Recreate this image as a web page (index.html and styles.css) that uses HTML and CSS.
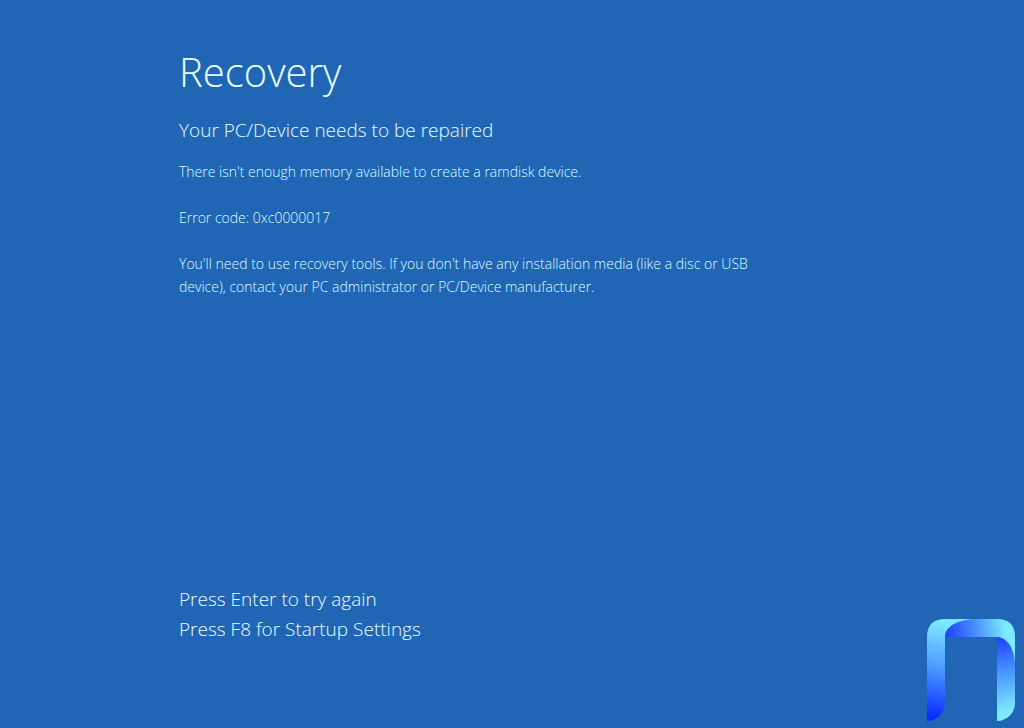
FILE: index.html
```
<!DOCTYPE html>
<html lang="en">
<head>
    <meta charset="UTF-8">
    <meta name="viewport" content="width=device-width, initial-scale=1.0">
    <title>Recovery</title>
    <link rel="stylesheet" href="styles.css">
</head>
<body>
    <main class="message">
        <h1>Recovery</h1>
        <h2>Your PC/Device needs to be repaired</h2>
        <p>There isn't enough memory available to create a ramdisk device.</p>
        <p>Error code: 0xc0000017</p>
        <p>You'll need to use recovery tools. If you don't have any installation media (like a disc or USB device), contact your PC administrator or PC/Device manufacturer.</p>
    </main>

    <!-- Key hints and logo -->
    <footer class="footer">
        <div class="keys">
            <p>Press Enter to try again</p>
            <p>Press F8 for Startup Settings</p>
        </div>
        <svg class="logo" viewBox="0 0 88 102" role="img" aria-label="Logo">
            <defs>
                <linearGradient id="left" gradientUnits="userSpaceOnUse" x1="22" y1="4" x2="4" y2="98">
                    <stop offset="0" stop-color="#7deaff"/>
                    <stop offset="0.5" stop-color="#4a96ff"/>
                    <stop offset="1" stop-color="#0a2cff"/>
                </linearGradient>
                <linearGradient id="top" gradientUnits="userSpaceOnUse" x1="20" y1="14" x2="78" y2="6">
                    <stop offset="0" stop-color="#1f45ff"/>
                    <stop offset="0.5" stop-color="#4a8fff"/>
                    <stop offset="1" stop-color="#7deaff"/>
                </linearGradient>
                <linearGradient id="right" gradientUnits="userSpaceOnUse" x1="72" y1="20" x2="84" y2="92">
                    <stop offset="0" stop-color="#1f45ff"/>
                    <stop offset="0.5" stop-color="#4c9cff"/>
                    <stop offset="1" stop-color="#7deaff"/>
                </linearGradient>
            </defs>
            <path fill="url(#left)" d="M0 102V18Q0 0 18 0H50L18 18V84C18 94 10 102 0 102Z"/>
            <path fill="url(#top)" d="M18 18C18 7 32 0 50 0H70Q88 0 88 18V46L70 18Z"/>
            <path fill="url(#right)" d="M70 18C81 18 88 32 88 46V84C88 94 80 102 70 102Z"/>
        </svg>
    </footer>
</body>
</html>
```
FILE: styles.css
```
* { margin: 0; padding: 0; box-sizing: border-box; }
body { font-family: "Open Sans", "Noto Sans", sans-serif; font-weight: 300; background-color: #2166b4; color: #e8ffff; min-height: 100vh; display: flex; flex-direction: column; justify-content: space-between; }

.message { width: 77%; padding: 44px 0 0 179px; }
h1 { font-size: 40px; font-weight: 300; line-height: 56px; margin-bottom: 16px; }
h2 { font-size: 19px; font-weight: 300; line-height: 28px; margin-bottom: 16px; }
.message p { font-size: 14px; line-height: 23px; margin-bottom: 23px; color: #dcfcff; }

/* Bottom row */
.footer { display: flex; justify-content: space-between; align-items: flex-end; padding: 0 9px 7px 179px; }
.keys { font-size: 19px; line-height: 30px; padding-bottom: 77px; }
.logo { width: 88px; height: 102px; }
```
